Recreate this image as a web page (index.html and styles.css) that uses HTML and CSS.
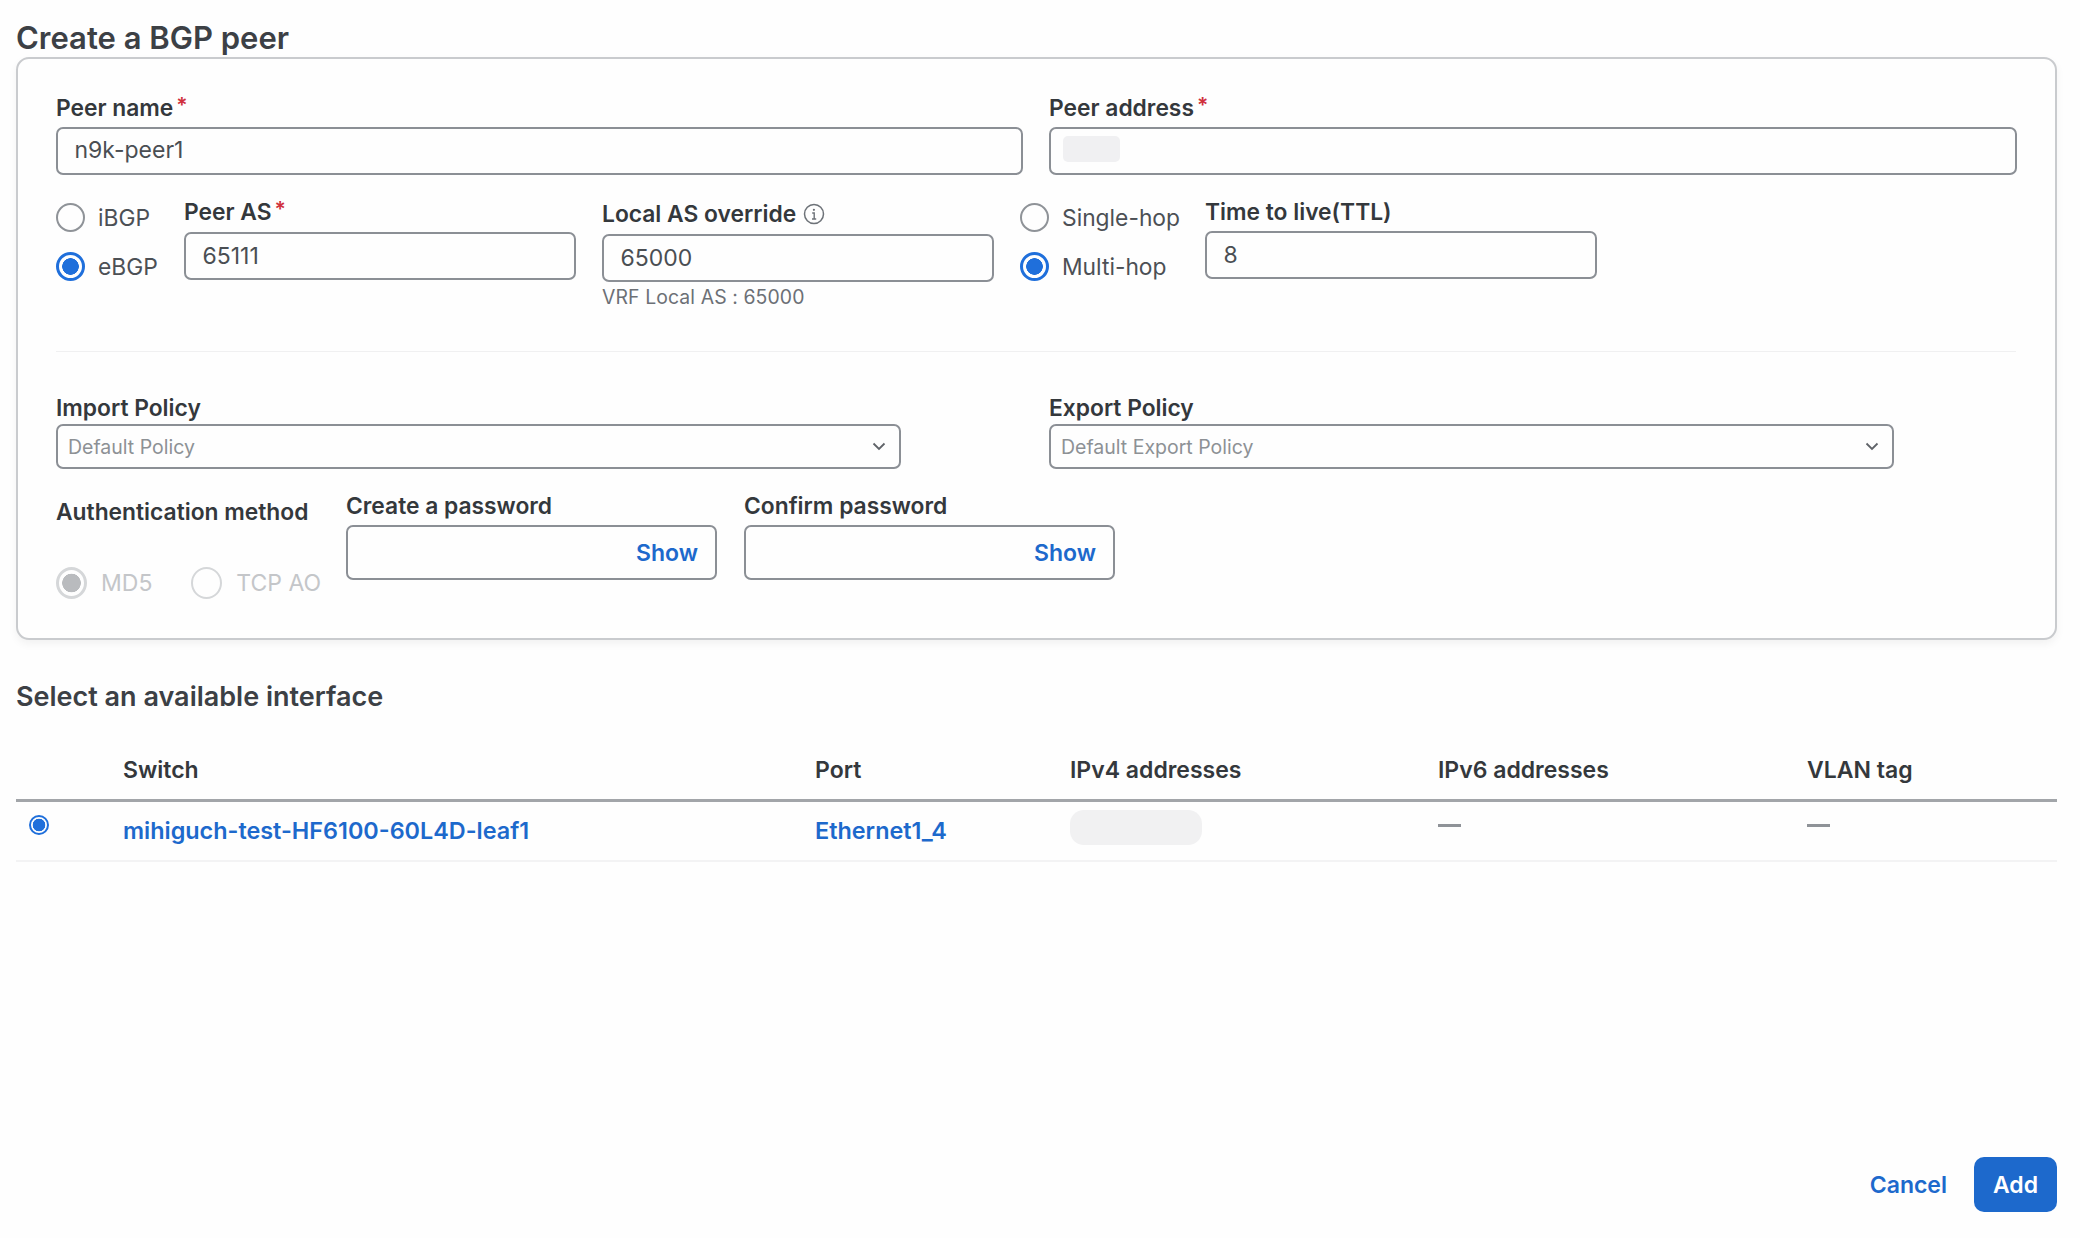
FILE: index.html
```html
<!DOCTYPE html>
<html lang="en">
<head>
<meta charset="utf-8">
<title>Create a BGP peer</title>
<link rel="stylesheet" href="styles.css">
</head>
<body>
<h1 class="title">Create a BGP peer</h1>
<section class="panel">
  <div class="two-col">
    <div>
      <div class="label label-top">Peer name<span class="req">*</span></div>
      <div class="input">n9k-peer1</div>
    </div>
    <div>
      <div class="label label-top">Peer address<span class="req">*</span></div>
      <div class="input"><span class="mask-address"></span></div>
    </div>
  </div>

  <div class="peer-row">
    <div class="radios radios-type">
      <div class="radio-line"><span class="radio"></span><span>iBGP</span></div>
      <div class="radio-line"><span class="radio on"></span><span>eBGP</span></div>
    </div>
    <div class="field field-as">
      <div class="label">Peer AS<span class="req">*</span></div>
      <div class="input">65111</div>
    </div>
    <div class="field field-local">
      <div class="label">Local AS override
        <svg class="info" viewBox="0 0 22 22" width="22" height="22" aria-hidden="true"><circle cx="11" cy="11" r="9.5" fill="none" stroke="#6d7278" stroke-width="1.5"/><path d="M9.2 10h2v6M9 16h4.2" fill="none" stroke="#6d7278" stroke-width="1.4"/><circle cx="10.9" cy="6.8" r="1.1" fill="#6d7278"/></svg>
      </div>
      <div class="input">65000</div>
      <div class="help">VRF Local AS : 65000</div>
    </div>
    <div class="radios radios-hop">
      <div class="radio-line"><span class="radio"></span><span>Single-hop</span></div>
      <div class="radio-line"><span class="radio on"></span><span>Multi-hop</span></div>
    </div>
    <div class="field field-ttl">
      <div class="label">Time to live(TTL)</div>
      <div class="input">8</div>
    </div>
  </div>

  <hr class="divider">

  <div class="two-col policy-row">
    <div>
      <div class="label label-tight">Import Policy</div>
      <div class="select"><span>Default Policy</span>
        <svg viewBox="0 0 14 9" width="14" height="9" aria-hidden="true"><path d="M1.5 1.5 7 7l5.5-5.5" fill="none" stroke="#5f6368" stroke-width="1.8"/></svg>
      </div>
    </div>
    <div>
      <div class="label label-tight">Export Policy</div>
      <div class="select"><span>Default Export Policy</span>
        <svg viewBox="0 0 14 9" width="14" height="9" aria-hidden="true"><path d="M1.5 1.5 7 7l5.5-5.5" fill="none" stroke="#5f6368" stroke-width="1.8"/></svg>
      </div>
    </div>
  </div>

  <div class="auth-row">
    <div class="auth">
      <div class="label">Authentication method</div>
      <div class="auth-options">
        <div class="radio-line disabled"><span class="radio big dim-on"></span><span>MD5</span></div>
        <div class="radio-line disabled"><span class="radio big dim"></span><span>TCP AO</span></div>
      </div>
    </div>
    <div class="field-pass">
      <div class="label">Create a password</div>
      <div class="pass"><span class="link-strong">Show</span></div>
    </div>
    <div class="field-pass">
      <div class="label">Confirm password</div>
      <div class="pass"><span class="link-strong">Show</span></div>
    </div>
  </div>
</section>

<h2 class="subtitle">Select an available interface</h2>

<div class="table">
  <div class="tr th">
    <span></span><span>Switch</span><span>Port</span><span>IPv4 addresses</span><span>IPv6 addresses</span><span>VLAN tag</span>
  </div>
  <div class="tr td">
    <span class="cell-radio"><span class="radio small on"></span></span>
    <span class="link">mihiguch-test-HF6100-60L4D-leaf1</span>
    <span class="link">Ethernet1_4</span>
    <span class="cell-raised"><span class="mask-ip"></span></span>
    <span class="cell-raised dash"></span>
    <span class="cell-raised dash"></span>
  </div>
</div>

<footer class="footer">
  <span class="cancel">Cancel</span>
  <span class="add">Add</span>
</footer>
</body>
</html>
```

FILE: styles.css
```css
* { box-sizing: border-box; }
html, body { height: 100%; }
body {
  margin: 0;
  padding: 0 23px 26px 16px;
  background: #fefefe;
  color: #3a3e43;
  font-family: Inter, "Liberation Sans", sans-serif;
  font-size: 22px;
  display: flex;
  flex-direction: column;
  min-height: 1238px;
}
.title {
  margin: 0;
  height: 57px;
  padding-top: 20px;
  font-size: 31px;
  line-height: 36px;
  font-weight: 600;
  color: #3c4045;
}
.panel {
  height: 583px;
  border: 2px solid #c9cbce;
  border-radius: 13px;
  padding: 36px 39px 0 38px;
  box-shadow: 0 4px 8px rgba(0, 0, 0, 0.05);
  background: #fefefe;
}
.two-col {
  display: grid;
  grid-template-columns: 967px 968px;
  column-gap: 26px;
}
.label {
  font-size: 22.8px;
  line-height: 26px;
  font-weight: 600;
  color: #34383c;
  margin-bottom: 6px;
  white-space: nowrap;
}
.label-top { margin-bottom: 5px; }
.label-tight { margin-bottom: 3px; }
.req { color: #d0303c; margin-left: 3px; position: relative; top: -3px; font-size: 21px; }
.input {
  height: 48px;
  border: 2.5px solid #8b8f95;
  border-radius: 7px;
  padding: 0 16.5px 2px;
  display: flex;
  align-items: center;
  font-size: 23px;
  font-weight: 400;
  color: #4a4e53;
  background: #fefefe;
}
.peer-row .input { padding-bottom: 0; }
.mask-address {
  width: 57px;
  height: 26px;
  margin-left: -5px;
  margin-top: -2px;
  border-radius: 5px;
  background: #f0f0f2;
}
.peer-row {
  display: flex;
  margin-top: 24px;
  height: 152px;
}
.radios { display: flex; flex-direction: column; gap: 20px; padding-top: 4px; font-size: 22.8px; color: #4c5055; }
.radios-type { width: 128px; }
.radios-hop { width: 185px; }
.radio-line { display: flex; align-items: center; gap: 13px; height: 29px; white-space: nowrap; }
.radio {
  width: 29px;
  height: 29px;
  flex: none;
  border-radius: 50%;
  border: 2px solid #8f9398;
  background: #fefefe;
  display: inline-block;
}
.radio.on {
  border: 3px solid #1f6fdb;
  background: radial-gradient(circle, #1f6fdb 0 8px, #fefefe 8.6px);
}
.radio.big { width: 31px; height: 32px; }
.radio.dim { border-color: #d5d7d9; }
.radio.dim-on {
  border: 3px solid #d5d7d9;
  background: radial-gradient(circle, #b9bbbe 0 9px, #fefefe 9.6px);
}
.radio.small { width: 20px; height: 20px; border-width: 2px; background: radial-gradient(circle, #1f6fdb 0 6px, #fefefe 6.6px); }
.field-as, .field-ttl { width: 392px; }
.field-as .label, .field-ttl .label { margin-bottom: 6px; }
.field-local { width: 392px; margin-left: 26px; margin-top: 2px; margin-right: 26px; }
.field-local .label { display: flex; align-items: center; gap: 7px; margin-bottom: 7px; }
.info { flex: none; }
.help { font-size: 19.4px; line-height: 24px; color: #6c7076; margin-top: 3px; letter-spacing: 0.1px; }
.divider { margin: 0; border: 0; border-top: 1px solid #f0f0f1; }
.policy-row { margin-top: 43px; grid-template-columns: 845px 845px; column-gap: 148px; }
.select {
  height: 45px;
  border: 2.5px solid #8b8f95;
  border-radius: 7px;
  padding: 0 13px 0 10px;
  display: flex;
  align-items: center;
  justify-content: space-between;
  font-size: 19.5px;
  color: #8d9195;
}
.auth-row { display: flex; margin-top: 24px; }
.auth { width: 290px; padding-top: 6px; }
.auth-options { display: flex; gap: 39px; margin-top: 42px; }
.radio-line.disabled { height: 32px; gap: 14px; font-size: 23px; color: #c4c6c9; }
.field-pass { width: 371px; margin-right: 27px; }
.pass {
  height: 55px;
  border: 2.5px solid #8b8f95;
  border-radius: 7px;
  display: flex;
  align-items: center;
  justify-content: flex-end;
  padding-right: 17px;
}
.link-strong { color: #1d69cc; font-weight: 600; font-size: 23px; }
.subtitle {
  margin: 41px 0 0;
  font-size: 27px;
  line-height: 32px;
  font-weight: 600;
  color: #3c4045;
}
.table { margin-top: 30px; }
.tr {
  display: grid;
  grid-template-columns: 107px 692px 255px 368px 369px 1fr;
}
.th {
  height: 59px;
  padding-top: 13px;
  line-height: 28px;
  font-weight: 600;
  font-size: 23px;
  color: #34383c;
  border-bottom: 3px solid #a2a5a9;
}
.td {
  height: 60px;
  border-bottom: 2px solid #f3f3f4;
  padding-top: 15px;
  line-height: 28px;
  font-size: 22px;
}
.link { color: #1d69cc; font-weight: 600; font-size: 23.4px; white-space: nowrap; }
.cell-radio { display: flex; padding: 0 0 0 13px; margin-top: -2px; }
.cell-raised { margin-top: -7px; display: block; }
.mask-ip { display: block; width: 132px; height: 35px; border-radius: 14px; background: #f1f1f2; }
.dash { position: relative; }
.dash::before { content: ""; display: block; width: 23px; height: 3px; background: #8f9398; margin-top: 14px; }
.footer {
  margin-top: auto;
  display: flex;
  justify-content: flex-end;
  align-items: center;
  gap: 27px;
}
.cancel { color: #1d69cc; font-weight: 600; font-size: 23px; }
.add {
  width: 83px;
  height: 55px;
  border-radius: 10px;
  background: #1d69cc;
  color: #fff;
  font-weight: 600;
  font-size: 23px;
  display: flex;
  align-items: center;
  justify-content: center;
}
```
